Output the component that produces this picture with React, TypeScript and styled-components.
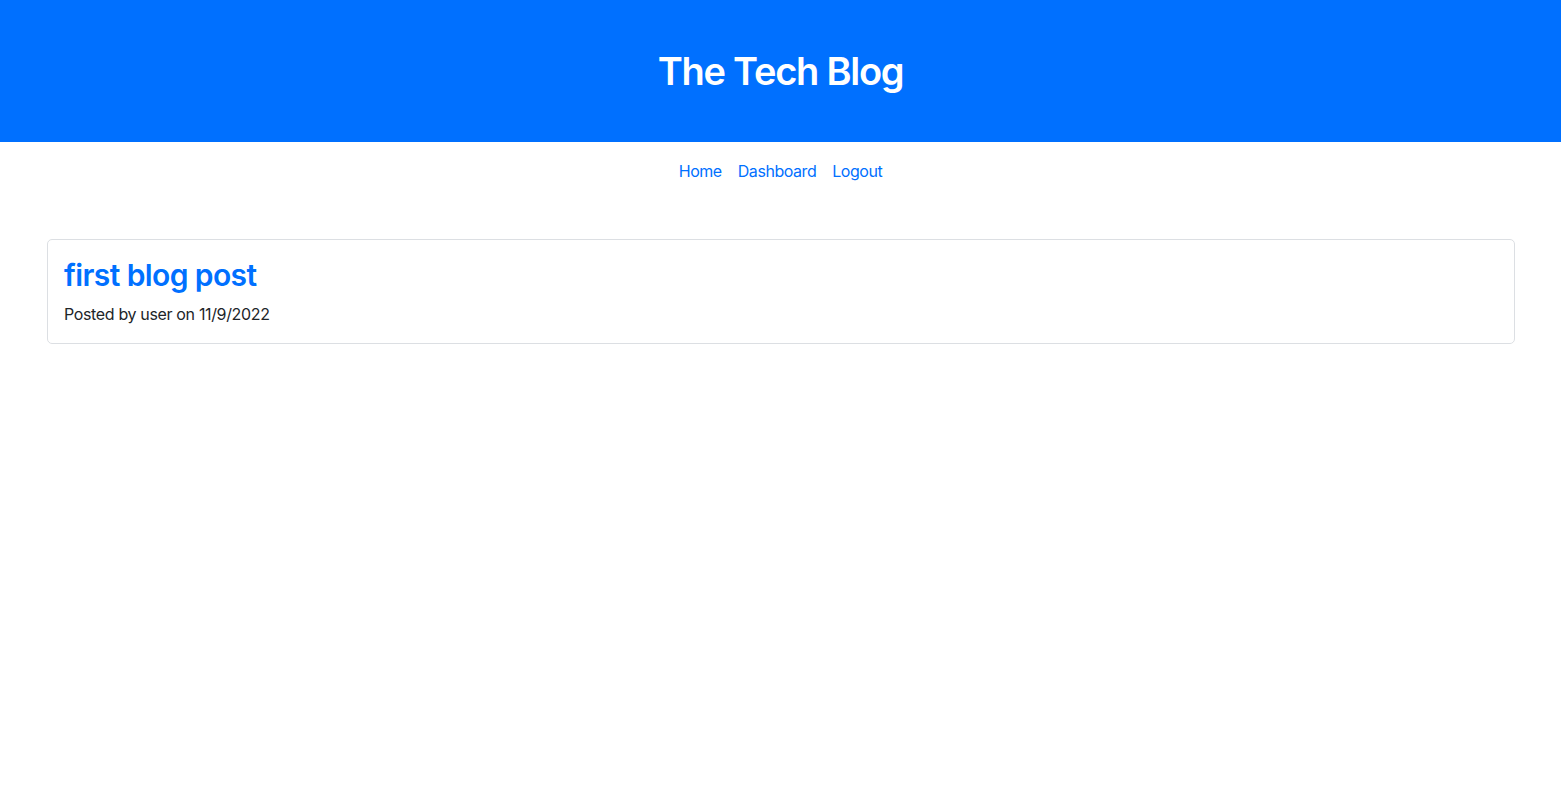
import React from 'react';
import styled, { createGlobalStyle } from 'styled-components';

const GlobalStyle = createGlobalStyle`
  body {
    margin: 0;
    font-family: Inter, "Noto Sans", "Liberation Sans", sans-serif;
    font-size: 16px;
    line-height: 1.5;
    color: #212529;
    background: #fff;
  }
`;

const Header = styled.header`
  background: #0070ff;
  height: 142px;
  display: flex;
  align-items: center;
  justify-content: center;

  h1 {
    margin: 0;
    color: #fff;
    font-size: 38px;
    font-weight: 600;
    line-height: 1.2;
    letter-spacing: -1.25px;
    padding-top: 2px;
  }
`;

const Nav = styled.nav`
  display: flex;
  justify-content: center;
  gap: 16px;
  padding-top: 17px;
`;

const NavLink = styled.a`
  color: #0070ff;
  text-decoration: none;
  font-size: 16px;
  line-height: 24px;
  letter-spacing: -0.45px;
  cursor: pointer;
`;

const Main = styled.main`
  padding: 56px 46px 0 47px;
`;

const Card = styled.article`
  border: 1px solid #dcdfe3;
  border-radius: 5px;
  padding: 16px 16px 17px;
`;

const PostTitle = styled.a`
  display: block;
  color: #0070ff;
  text-decoration: none;
  font-size: 30px;
  font-weight: 600;
  line-height: 1.2;
  letter-spacing: -0.6px;
  margin-bottom: 9px;
  padding-top: 1px;
`;

const Meta = styled.p`
  margin: 0;
  font-size: 16px;
  line-height: 24px;
  letter-spacing: -0.35px;
`;

const posts = [{ title: 'first blog post', user: 'user', date: '11/9/2022' }];

const App: React.FC = () => {
  return (
    <>
      <GlobalStyle />
      <Header>
        <h1>The Tech Blog</h1>
      </Header>
      <Nav>
        <NavLink>Home</NavLink>
        <NavLink>Dashboard</NavLink>
        <NavLink>Logout</NavLink>
      </Nav>
      <Main>
        {posts.map((post) => (
          <Card key={post.title}>
            <PostTitle>{post.title}</PostTitle>
            <Meta>
              Posted by {post.user} on {post.date}
            </Meta>
          </Card>
        ))}
      </Main>
    </>
  );
};

export default App;
